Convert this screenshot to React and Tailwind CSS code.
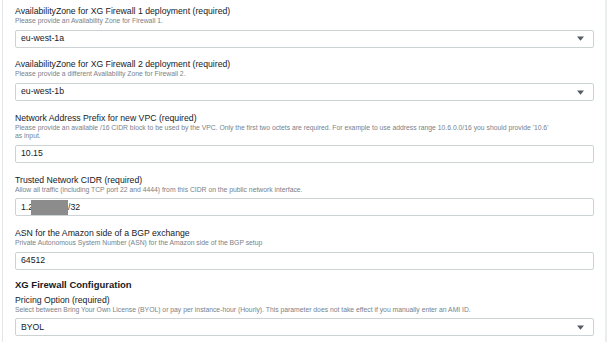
import React from "react";

const Field = ({ label, desc, value, select, children }) => (
  <div className="flex flex-col">
    <div className="text-[8.7px] leading-[12px] text-[#16191f]">{label}</div>
    <div className="text-[6.8px] leading-[8.7px] text-[#79828a]">{desc}</div>
    <div className="mt-[4px] h-[18px] border border-[#cdd3d4] rounded-[2px] bg-white flex items-center pl-[5px] pr-[9px] text-[8.7px] text-[#16191f]">
      <div className="flex-1 flex items-center">{children || value}</div>
      {select && (
        <svg width="7" height="5" viewBox="0 0 7 5" className="text-[#545b64]">
          <path d="M0 0.5 H7 L3.5 4.8 Z" fill="currentColor" />
        </svg>
      )}
    </div>
  </div>
);

export default function App() {
  return (
    <div className="w-[609px] h-[342px] bg-white overflow-hidden font-['Liberation_Sans',Arial,sans-serif]">
      <div className="ml-[2px] w-[605px] h-full border-l border-r-2 border-l-[#e3e6e6] border-r-[#eaeded] pl-[12px] pr-[11px] pt-[5px] flex flex-col gap-[10.6px]">
        <Field
          label="AvailabilityZone for XG Firewall 1 deployment (required)"
          desc="Please provide an Availability Zone for Firewall 1."
          value="eu-west-1a"
          select
        />
        <Field
          label="AvailabilityZone for XG Firewall 2 deployment (required)"
          desc="Please provide a different Availability Zone for Firewall 2."
          value="eu-west-1b"
          select
        />
        <Field
          label="Network Address Prefix for new VPC (required)"
          desc={
            <>
              Please provide an available /16 CIDR block to be used by the VPC. Only the first two octets are required. For example to use address range 10.6.0.0/16 you should provide '10.6'
              <br />
              as input.
            </>
          }
          value="10.15"
        />
        <Field
          label="Trusted Network CIDR (required)"
          desc="Allow all traffic (including TCP port 22 and 4444) from this CIDR on the public network interface."
        >
          <span>1.2</span>
          <span className="inline-block w-[37px] h-[15px] bg-[#8c8c8c] -ml-[2px]" />
          <span>/32</span>
        </Field>
        <div className="flex flex-col">
          <Field
            label="ASN for the Amazon side of a BGP exchange"
            desc="Private Autonomous System Number (ASN) for the Amazon side of the BGP setup"
            value="64512"
          />
          <div className="mt-[9px] mb-[3px] text-[9.5px] leading-[12px] font-bold text-[#16191f]">
            XG Firewall Configuration
          </div>
          <Field
            label="Pricing Option (required)"
            desc="Select between Bring Your Own License (BYOL) or pay per instance-hour (Hourly). This parameter does not take effect if you manually enter an AMI ID."
            value="BYOL"
            select
          />
        </div>
      </div>
    </div>
  );
}
